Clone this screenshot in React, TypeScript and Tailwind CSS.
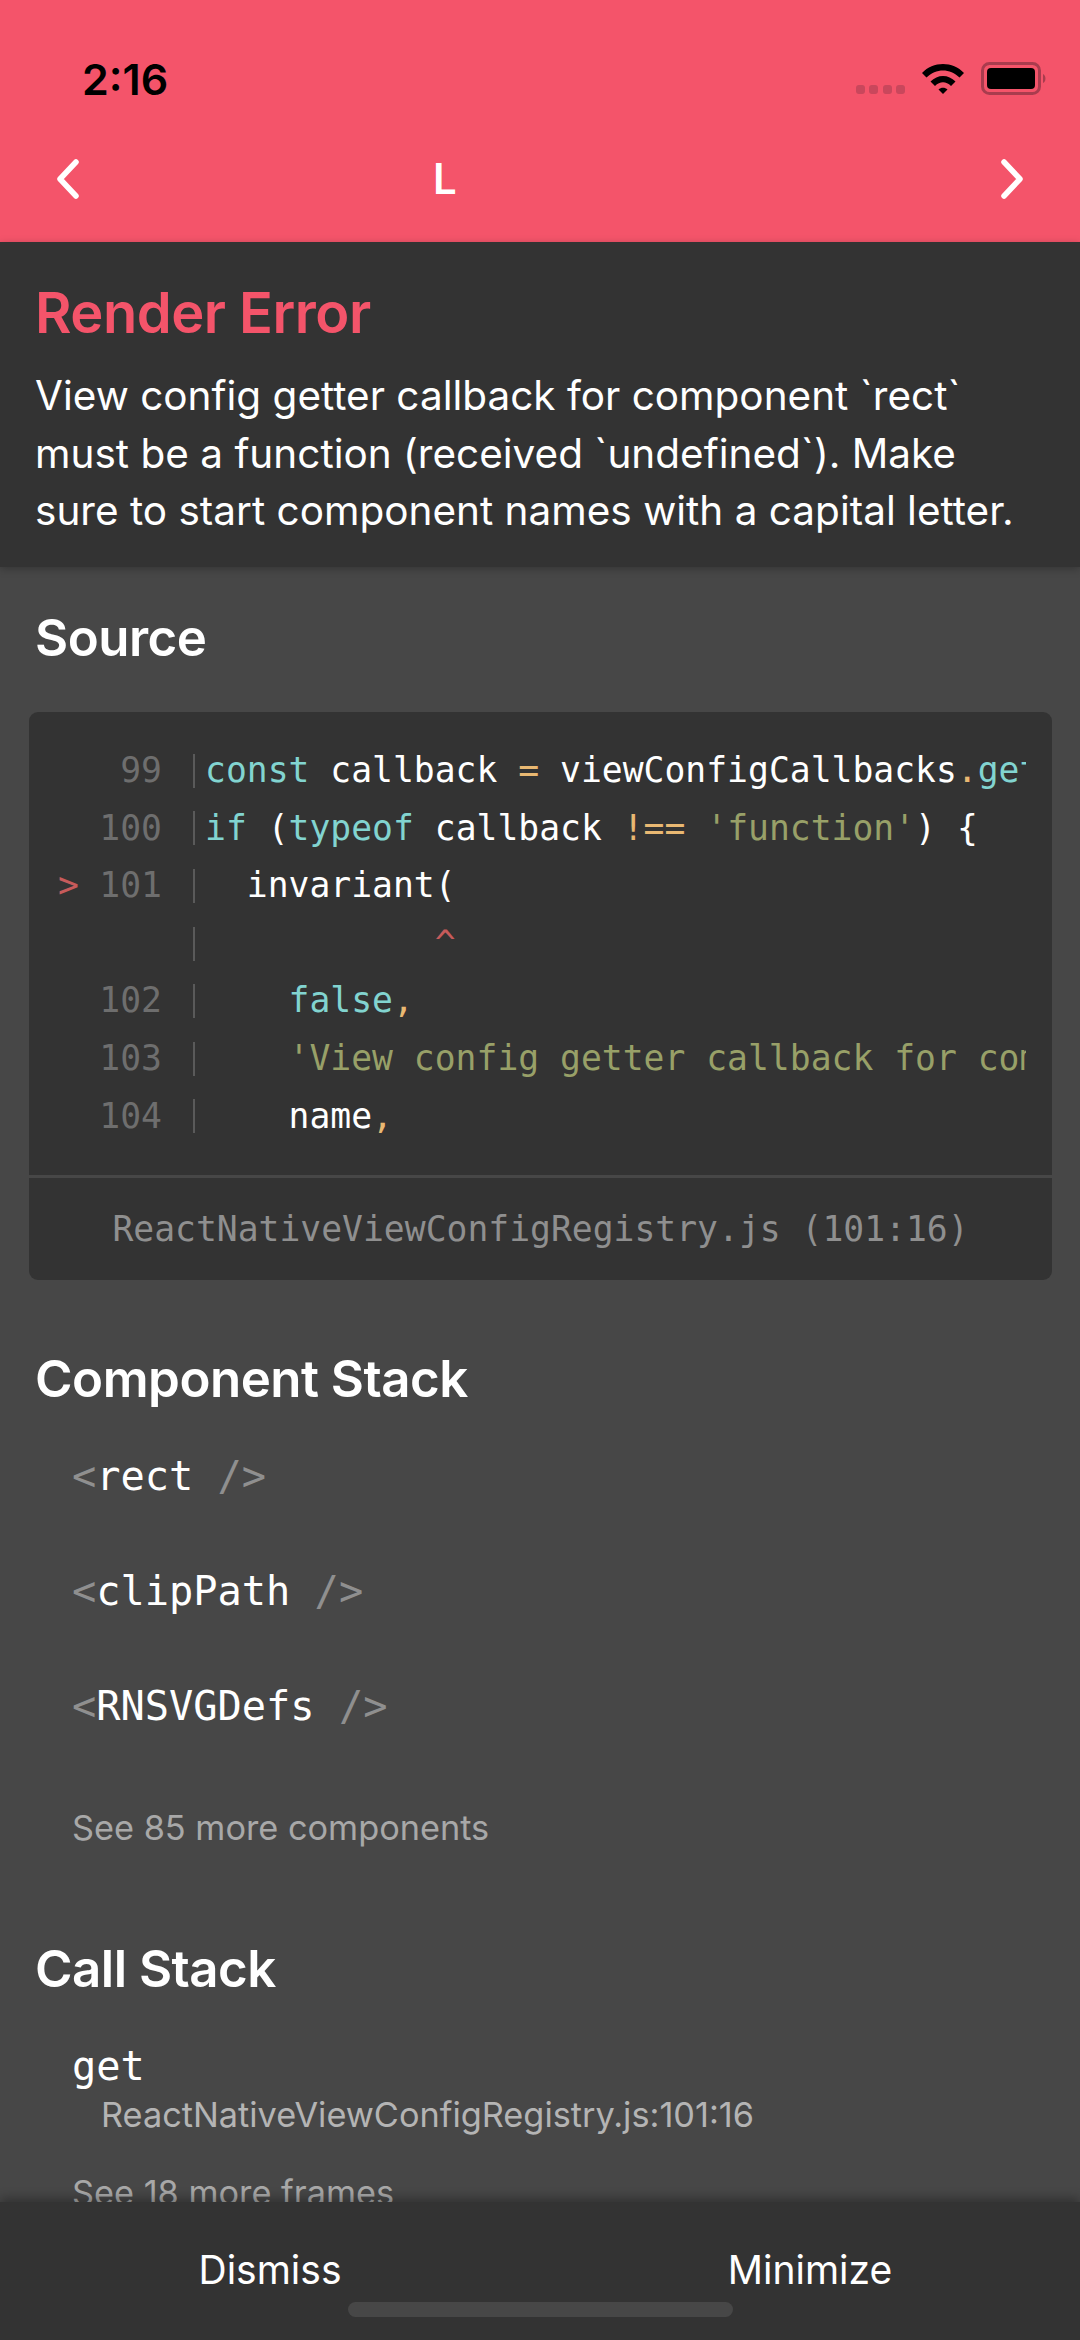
import React from 'react';

const SANS = "font-['Inter','Noto_Sans',sans-serif]";
const MONO = "font-['DejaVu_Sans_Mono','Liberation_Mono',monospace]";

const WHITE = 'text-white';
const TEAL = 'text-[#82d4d0]';
const ORANGE = 'text-[#e9b872]';
const OLIVE = 'text-[#98a068]';

type Token = [string, string];
type CodeLine = { num: string; marker?: boolean; tokens: Token[] };

const CODE_LINES: CodeLine[] = [
  {
    num: '99',
    tokens: [
      ['const', TEAL],
      [' callback ', WHITE],
      ['=', ORANGE],
      [' viewConfigCallbacks', WHITE],
      ['.', ORANGE],
      ['get', TEAL],
    ],
  },
  {
    num: '100',
    tokens: [
      ['if', TEAL],
      [' (', WHITE],
      ['typeof', TEAL],
      [' callback ', WHITE],
      ['!==', ORANGE],
      [' ', WHITE],
      ["'function'", OLIVE],
      [') {', WHITE],
    ],
  },
  { num: '101', marker: true, tokens: [['  invariant(', WHITE]] },
  { num: '', tokens: [['           ^', 'text-[#c75b5b]']] },
  {
    num: '102',
    tokens: [
      ['    ', WHITE],
      ['false', TEAL],
      [',', ORANGE],
    ],
  },
  {
    num: '103',
    tokens: [
      ['    ', WHITE],
      ["'View config getter callback for com", OLIVE],
    ],
  },
  {
    num: '104',
    tokens: [
      ['    name', WHITE],
      [',', ORANGE],
    ],
  },
];

const StackItem = ({ name, className }: { name: string; className: string }) => (
  <div className={`${MONO} ${className} ml-[72px] h-[58px] text-[40.3px] leading-[58px] text-[#8f8f8f] whitespace-pre`}>
    {'<'}
    <span className="text-white">{name}</span>
    {' />'}
  </div>
);

const SectionTitle = ({ children }: { children: React.ReactNode }) => (
  <h2 className="ml-[35px] h-[60px] text-[51px] leading-[60px] font-semibold text-white tracking-[-0.5px]">{children}</h2>
);

export default function App() {
  return (
    <div className={`${SANS} flex h-[2340px] w-[1080px] flex-col overflow-hidden bg-[#474747]`}>
      {/* Header */}
      <div className="h-[242px] shrink-0 bg-[#f4546a]">
        <div className="flex h-[157px] items-start justify-between pt-[54px] pl-[82px] pr-[33px]">
          <span className="text-[43px] leading-[50px] font-semibold text-black">2:16</span>
          <div className="flex items-start pt-[8px]">
            <div className="mt-[23px] mr-[16px] flex gap-[4.3px]">
              {[0, 1, 2, 3].map((i) => (
                <span key={i} className="h-[9px] w-[9px] rounded-[3px] bg-[#c9475c]" />
              ))}
            </div>
            <svg width="44" height="32" viewBox="0 0 44 32" className="mr-[16px]">
              <path d="M1 11 C12 -1 32 -1 43 11 L38.5 15.5 C29 6 15 6 5.5 15.5 Z" fill="#000" />
              <path d="M9.5 19.5 C16.5 12 27.5 12 34.5 19.5 L30 24 C25 19 19 19 14 24 Z" fill="#000" />
              <path d="M17.5 27.5 C20 25 24 25 26.5 27.5 L22 32 Z" fill="#000" />
            </svg>
            <svg width="66" height="34" viewBox="0 0 66 34">
              <rect x="1.5" y="1.5" width="57" height="30" rx="7" fill="none" stroke="#a93c4e" strokeWidth="3" />
              <rect x="6" y="6" width="48" height="21" rx="4" fill="#000" />
              <path d="M62 12 C65 13 65.5 20 62 21 Z" fill="#a93c4e" />
            </svg>
          </div>
        </div>
        <div className="flex items-center pl-[54px] pr-[54px]">
          <svg width="28" height="40" viewBox="0 0 28 40" fill="none" stroke="#fff" strokeWidth="5.5" strokeLinecap="round" strokeLinejoin="round">
            <path d="M22 3 L6 20 L22 37" />
          </svg>
          <span className="ml-[351px] mr-auto text-[42px] leading-[44px] font-semibold text-white">L</span>
          <svg width="28" height="40" viewBox="0 0 28 40" fill="none" stroke="#fff" strokeWidth="5.5" strokeLinecap="round" strokeLinejoin="round">
            <path d="M6 3 L22 20 L6 37" />
          </svg>
        </div>
      </div>

      {/* Error message */}
      <div className="relative z-10 h-[325px] shrink-0 bg-[#333333] px-[35px] pt-[40px] shadow-[0_2px_8px_rgba(0,0,0,0.25)]">
        <h1 className="h-[62px] text-[56px] leading-[62px] font-semibold text-[#f4546a] tracking-[-0.5px]">Render Error</h1>
        <p className="mt-[23px] text-[40.5px] leading-[57.5px] text-white whitespace-pre">
          {'View config getter callback for component `rect`\nmust be a function (received `undefined`). Make\nsure to start component names with a capital letter.'}
        </p>
      </div>

      {/* Scrolling body */}
      <div className="min-h-0 flex-1 overflow-hidden pt-[41px]">
        <SectionTitle>Source</SectionTitle>

        <div className="ml-[29px] mr-[28px] mt-[44px] rounded-[9px] bg-[#333333] pt-[30px]">
          <div className="h-[433px]">
            {CODE_LINES.map((line, i) => (
              <div key={i} className={`${MONO} flex h-[57.6px] items-center text-[34.7px] leading-[57.6px]`}>
                <span className="w-[58px] shrink-0 pl-[29px] text-[#c75b5b]">{line.marker ? '>' : ''}</span>
                <span className="w-[75px] shrink-0 text-right text-[#6e6e6e]">{line.num}</span>
                <span className="ml-[31px] h-[34px] w-[2px] shrink-0 bg-[#5a5a5a]" />
                <span className="ml-[10px] w-[821px] overflow-hidden whitespace-pre">
                  {line.tokens.map(([text, color], j) => (
                    <span key={j} className={color}>
                      {text}
                    </span>
                  ))}
                </span>
              </div>
            ))}
          </div>
          <div className="h-[3px] bg-[#474747]" />
          <div className={`${MONO} flex h-[102px] items-center justify-center text-[34.7px] text-[#8f8f8f]`}>
            ReactNativeViewConfigRegistry.js (101:16)
          </div>
        </div>

        <div className="mt-[69px]">
          <SectionTitle>Component Stack</SectionTitle>
        </div>
        <StackItem name="rect" className="mt-[39px]" />
        <StackItem name="clipPath" className="mt-[57px]" />
        <StackItem name="RNSVGDefs" className="mt-[57px]" />
        <div className="mt-[72px] ml-[72px] h-[40px] text-[34.3px] leading-[40px] text-[#a8a8a8]">See 85 more components</div>

        <div className="mt-[91px]">
          <SectionTitle>Call Stack</SectionTitle>
        </div>
        <div className={`${MONO} mt-[39px] ml-[72px] h-[58px] text-[40.3px] leading-[58px] text-white`}>get</div>
        <div className="mt-[-3px] ml-[101px] h-[44px] text-[34.3px] leading-[44px] text-[#b4b4b4]">ReactNativeViewConfigRegistry.js:101:16</div>
        <div className="mt-[36px] ml-[72px] h-[40px] text-[34.3px] leading-[40px] text-[#a8a8a8]">See 18 more frames</div>
      </div>

      {/* Footer */}
      <div className="relative z-10 h-[138px] shrink-0 bg-[#333333] shadow-[0_-4px_10px_rgba(0,0,0,0.3)]">
        <div className="flex h-[100px] items-center pt-[36px]">
          <span className="w-1/2 text-center text-[39px] leading-[46px] text-white">Dismiss</span>
          <span className="w-1/2 text-center text-[39px] leading-[46px] text-white">Minimize</span>
        </div>
        <div className="mx-auto h-[15px] w-[385px] rounded-full bg-[#474747]" />
      </div>
    </div>
  );
}
